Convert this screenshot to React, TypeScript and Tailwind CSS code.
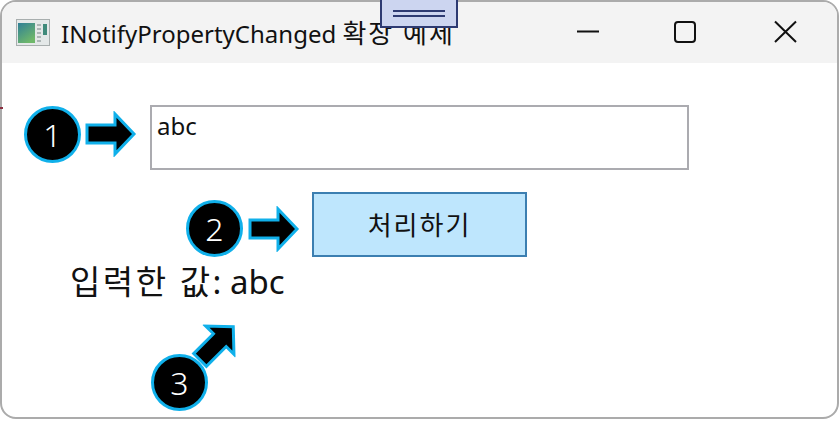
const FONT = "font-['Noto_Sans','Noto_Sans_CJK_KR',sans-serif]";

function Badge({ n, className }: { n: string; className: string }) {
  return (
    <div className={`absolute w-[57px] h-[57px] rounded-full bg-black border-[3px] border-[#10b0ea] flex items-center justify-center text-white text-[32px] font-light leading-none ${className}`}>
      {n}
    </div>
  );
}

function Arrow({ className, rotate }: { className: string; rotate?: boolean }) {
  return (
    <svg className={`absolute ${className}`} width="52" height="46" viewBox="0 0 52 46" style={rotate ? { transform: "rotate(-45deg)" } : undefined}>
      <path d="M2 14 H30 V3 L49 23 L30 43 V32 H2 Z" fill="#000" stroke="#10b0ea" strokeWidth="3" strokeLinejoin="miter" />
    </svg>
  );
}

export default function App() {
  return (
    <div className={`relative w-[839px] h-[424px] bg-white overflow-hidden ${FONT}`}>
      <div className="w-[839px] h-[419px] border-2 border-[#ababab] rounded-[16px] overflow-hidden bg-white flex flex-col">
        <div className="h-[61px] shrink-0 bg-[#f3f3f3] flex items-center pl-[14px]">
          <svg width="34" height="27" viewBox="0 0 34 27" className="shrink-0">
            <rect x="0.5" y="0.5" width="33" height="26" fill="#e4e8e8" stroke="#a8aeae" />
            <defs>
              <linearGradient id="g" x1="0" y1="0" x2="0.6" y2="1">
                <stop offset="0" stopColor="#2f7f96" />
                <stop offset="1" stopColor="#6fb86a" />
              </linearGradient>
            </defs>
            <rect x="2" y="4" width="17" height="20" fill="url(#g)" />
            <path d="M21 6h4M21 10h4M21 14h4M21 18h4M21 22h4" stroke="#9aa5a5" strokeWidth="1.5" />
            <rect x="27" y="5" width="4" height="11" fill="#3f8a7a" />
          </svg>
          <span className="ml-[11px] text-[24px] text-[#111] leading-none whitespace-nowrap">
            INotifyPropertyChanged <span className="text-[26px] tracking-[2px]">확장 예제</span>
          </span>
          <div className="ml-auto flex items-center text-black -translate-y-[2px]">
            <svg width="100" height="30" viewBox="0 0 100 30" className="block"><path d="M40 15.5H62" stroke="#111" strokeWidth="2" /></svg>
            <svg width="100" height="30" viewBox="0 0 100 30" className="block"><rect x="38" y="6" width="20" height="20" rx="3" fill="none" stroke="#111" strokeWidth="2" /></svg>
            <svg width="100" height="30" viewBox="0 0 100 30" className="block"><path d="M38 5.5L59 26M59 5.5L38 26" stroke="#111" strokeWidth="2" fill="none" /></svg>
          </div>
        </div>
        <div className="flex-1 flex flex-col relative pl-[148px] pt-[42px]">
          <div className="w-[539px] h-[65px] border-2 border-[#ababb0] px-[5px] pt-[4px] text-[24px] leading-[30px] text-[#111]">abc</div>
          <button className="ml-[162px] mt-[22px] w-[215px] h-[65px] bg-[#bee6fd] border-2 border-[#3c7fb1] text-[26px] tracking-[2px] text-[#111] leading-none">처리하기</button>
          <div className="-ml-[80px] mt-[3px] text-[33px] leading-[44px] text-[#111] whitespace-nowrap">
            <span className="tracking-[2.5px]">입력한 값</span>: abc
          </div>
        </div>
      </div>

      <div className="absolute left-[380px] -top-[2px] w-[78px] h-[30px] bg-[#ccd5f0] border-2 border-[#2d3a72] flex flex-col items-center justify-center gap-[3px]">
        <div className="w-[52px] h-[2px] bg-[#2d3a72]" />
        <div className="w-[52px] h-[2px] bg-[#2d3a72]" />
      </div>
      <div className="absolute left-0 top-[107px] w-[3px] h-[2px] bg-[#8a3040]" />

      <Arrow className="left-[85px] top-[111px]" />
      <Arrow className="left-[248px] top-[206px]" />
      <Arrow className="left-[191px] top-[320px]" rotate />
      <Badge n="1" className="left-[24px] top-[106px]" />
      <Badge n="2" className="left-[186px] top-[200px]" />
      <Badge n="3" className="left-[151px] top-[354px]" />
    </div>
  );
}
